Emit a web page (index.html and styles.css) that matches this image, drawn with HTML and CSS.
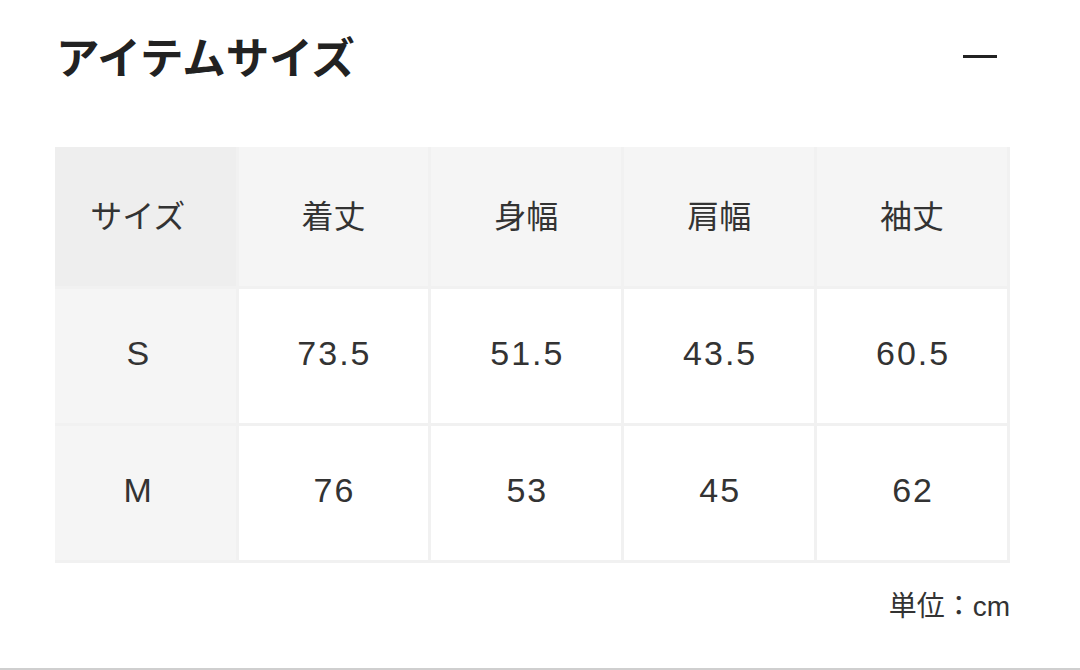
FILE: index.html
```html
<!DOCTYPE html>
<html lang="ja">
<head>
<meta charset="utf-8">
<link rel="stylesheet" href="styles.css">
</head>
<body>
<div class="page">
  <div class="head">
    <h2 class="title">アイテムサイズ</h2>
    <span class="minus"></span>
  </div>
  <table class="size">
    <colgroup>
      <col class="c0"><col class="cn"><col class="cn"><col class="cn"><col class="cn">
    </colgroup>
    <tr class="hrow">
      <th class="corner">サイズ</th><th>着丈</th><th>身幅</th><th>肩幅</th><th>袖丈</th>
    </tr>
    <tr class="brow">
      <th class="rh">S</th><td>73.5</td><td>51.5</td><td>43.5</td><td>60.5</td>
    </tr>
    <tr class="brow">
      <th class="rh">M</th><td>76</td><td>53</td><td>45</td><td>62</td>
    </tr>
  </table>
  <p class="unit">単位：cm</p>
</div>
</body>
</html>
```

FILE: styles.css
```css
html, body {
  margin: 0;
  padding: 0;
  background: #fff;
}
.page {
  width: 1080px;
  height: 670px;
  box-sizing: border-box;
  padding: 0 70px 0 55px;
  border-bottom: 2px solid #cfcfcf;
  font-family: "Liberation Sans", "Noto Sans CJK JP", sans-serif;
  color: #333;
}
.head {
  height: 112px;
  display: flex;
  align-items: center;
  justify-content: space-between;
}
.title {
  margin: 0 0 0 1px;
  font-family: "Noto Sans CJK JP", sans-serif;
  font-weight: 700;
  font-size: 43.5px;
  line-height: 1;
  color: #222;
}
.minus {
  width: 34px;
  height: 3px;
  background: #222;
  margin-right: 13px;
}
.size {
  margin-top: 35px;
  width: 955px;
  border-collapse: collapse;
  table-layout: fixed;
}
.c0 { width: 182px; }
.size th, .size td {
  border: 3px solid #f1f1f1;
  text-align: center;
  font-weight: 400;
  font-size: 34px;
  color: #333;
  padding: 0 0 5px;
}
.size td {
  letter-spacing: 2px;
  text-indent: 2px;
}
.size tr:first-child > * { border-top: 0; }
.size tr > *:first-child {
  border-left: 0;
  padding-right: 15px;
}
.hrow { height: 140px; }
.hrow th {
  background: #f5f5f5;
  font-family: "Noto Sans CJK JP", sans-serif;
  font-size: 32px;
}
.hrow th.corner { background: #eeeeee; }
.brow { height: 137px; }
.brow td { background: #fff; }
.brow th.rh { background: #f5f5f5; }
.unit {
  margin: 30px 0 0;
  text-align: right;
  font-size: 28px;
  line-height: 1;
  color: #333;
}
```
